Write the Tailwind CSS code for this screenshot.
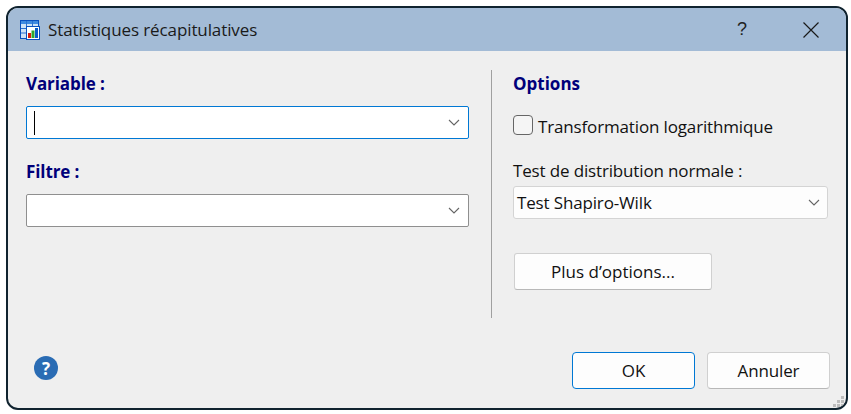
<!DOCTYPE html>
<html lang="fr">
  <head>
    <meta charset="UTF-8" />
    <title>Statistiques récapitulatives</title>
    <script src="https://cdn.jsdelivr.net/npm/@tailwindcss/browser@4"></script>
  </head>
  <body class="w-[851px] h-[414px] overflow-hidden bg-white pl-[6px] pt-[6px] font-['Open_Sans','Noto_Sans',sans-serif] text-[17px] text-[#111]">
    <div class="relative w-[842px] h-[404px] flex flex-col border-2 border-[#10232f] rounded-[12px] overflow-hidden bg-[#efefef]">
      <!-- title bar -->
      <div class="h-[43px] shrink-0 flex items-center bg-[#a3bbd6] pl-[12px]">
        <svg width="20" height="20" viewBox="0 0 20 20" class="shrink-0">
          <rect x="0.5" y="0.5" width="18" height="18" fill="#cfe2f7" stroke="#0a50c0" />
          <rect x="1" y="1" width="17" height="3" fill="#3f8ae0" />
          <path d="M1 8.5H18M1 13H18M6.5 1V18M12.5 1V18" stroke="#2a70d0" fill="none" />
          <rect x="6.5" y="6.5" width="13" height="13" fill="#fff" stroke="#0a50c0" />
          <rect x="8" y="13" width="3" height="5" fill="#d81e10" />
          <rect x="11.5" y="10.5" width="3" height="7.5" fill="#2fa82f" />
          <rect x="15" y="8" width="3" height="10" fill="#0a5cc8" />
        </svg>
        <span class="ml-[8px] text-[#1a1a1a] tracking-[-0.1px]">Statistiques récapitulatives</span>
        <span class="ml-auto w-[20px] text-center text-[#222] text-[18px] font-['Liberation_Sans',sans-serif]">?</span>
        <svg width="16" height="16" viewBox="0 0 16 16" class="ml-[51px] mr-[27px]">
          <path d="M0.5 0.5L15.5 15.5M15.5 0.5L0.5 15.5" stroke="#1a1a1a" stroke-width="1.2" fill="none" />
        </svg>
      </div>

      <!-- content -->
      <div class="flex pt-[19px] h-[267px] shrink-0">
        <div class="w-[461px] pl-[18px] shrink-0">
          <div class="h-[36px] pt-[2px] leading-[24px] font-bold text-[#00007a] tracking-[-0.1px]">Variable :</div>
          <div class="w-[443px] h-[33px] flex items-center bg-white border border-[#0078d4] rounded-[2px]">
            <div class="ml-[7px] w-[1px] h-[24px] bg-black"></div>
            <svg width="12" height="7" viewBox="0 0 12 7" class="ml-auto mr-[8px]"><path d="M1 1L6 6L11 1" fill="none" stroke="#666" stroke-width="1.1" /></svg>
          </div>
          <div class="h-[55px] pt-[21px] leading-[24px] font-bold text-[#00007a] tracking-[-0.1px]">Filtre :</div>
          <div class="w-[443px] h-[33px] flex items-center bg-white border border-[#8f8f8f] rounded-[2px]">
            <svg width="12" height="7" viewBox="0 0 12 7" class="ml-auto mr-[8px]"><path d="M1 1L6 6L11 1" fill="none" stroke="#666" stroke-width="1.1" /></svg>
          </div>
        </div>

        <div class="ml-[22px] w-[1px] h-[248px] bg-[#a0a0a0] shrink-0"></div>

        <div class="ml-[21px] w-[315px] shrink-0">
          <div class="h-[36px] pt-[2px] leading-[24px] font-bold text-[#00007a]">Options</div>
          <div class="h-[40px] pt-[9px] flex items-start">
            <div class="w-[20px] h-[20px] mr-[5px] bg-[#f5f5f5] border border-[#666] rounded-[4px]"></div>
            <span class="leading-[24px] tracking-[-0.15px]">Transformation logarithmique</span>
          </div>
          <div class="h-[41px] pt-[13px] leading-[24px] tracking-[-0.15px]">Test de distribution normale :</div>
          <div class="h-[33px] mt-[-1px] flex items-center bg-[#fdfdfd] border border-[#d4d4d4] rounded-[3px] pl-[3px] tracking-[-0.15px]">
            Test Shapiro-Wilk
            <svg width="12" height="7" viewBox="0 0 12 7" class="ml-auto mr-[7px]"><path d="M1 1L6 6L11 1" fill="none" stroke="#666" stroke-width="1.1" /></svg>
          </div>
          <button class="block mt-[34px] ml-[1px] w-[198px] h-[37px] bg-[#fdfdfd] border border-[#d0d0d0] border-b-[#b8b8b8] rounded-[3px]">Plus d’options...</button>
        </div>
      </div>

      <!-- footer -->
      <div class="flex items-start pt-[34px] pl-[26px]">
        <div class="w-[24px] h-[24px] mt-[4px] rounded-full bg-[#2a6cb4] flex items-center justify-center text-white font-bold text-[17px] leading-none">?</div>
        <button class="ml-[514px] w-[123px] h-[37px] bg-[#fdfdfd] border border-[#0078d4] rounded-[4px] tracking-[-0.15px]">OK</button>
        <button class="ml-[12px] w-[123px] h-[37px] bg-[#fdfdfd] border border-[#d0d0d0] border-b-[#b8b8b8] rounded-[4px] tracking-[-0.15px]">Annuler</button>
      </div>

      <!-- resize grip -->
      <svg width="12" height="12" viewBox="0 0 12 12" class="absolute right-[1px] bottom-[0px]" fill="#bdbdbd">
        <rect x="8" y="0" width="3" height="3" />
        <rect x="4" y="4" width="3" height="3" />
        <rect x="8" y="4" width="3" height="3" />
        <rect x="0" y="8" width="3" height="3" />
        <rect x="4" y="8" width="3" height="3" />
        <rect x="8" y="8" width="3" height="3" />
      </svg>
    </div>
  </body>
</html>
